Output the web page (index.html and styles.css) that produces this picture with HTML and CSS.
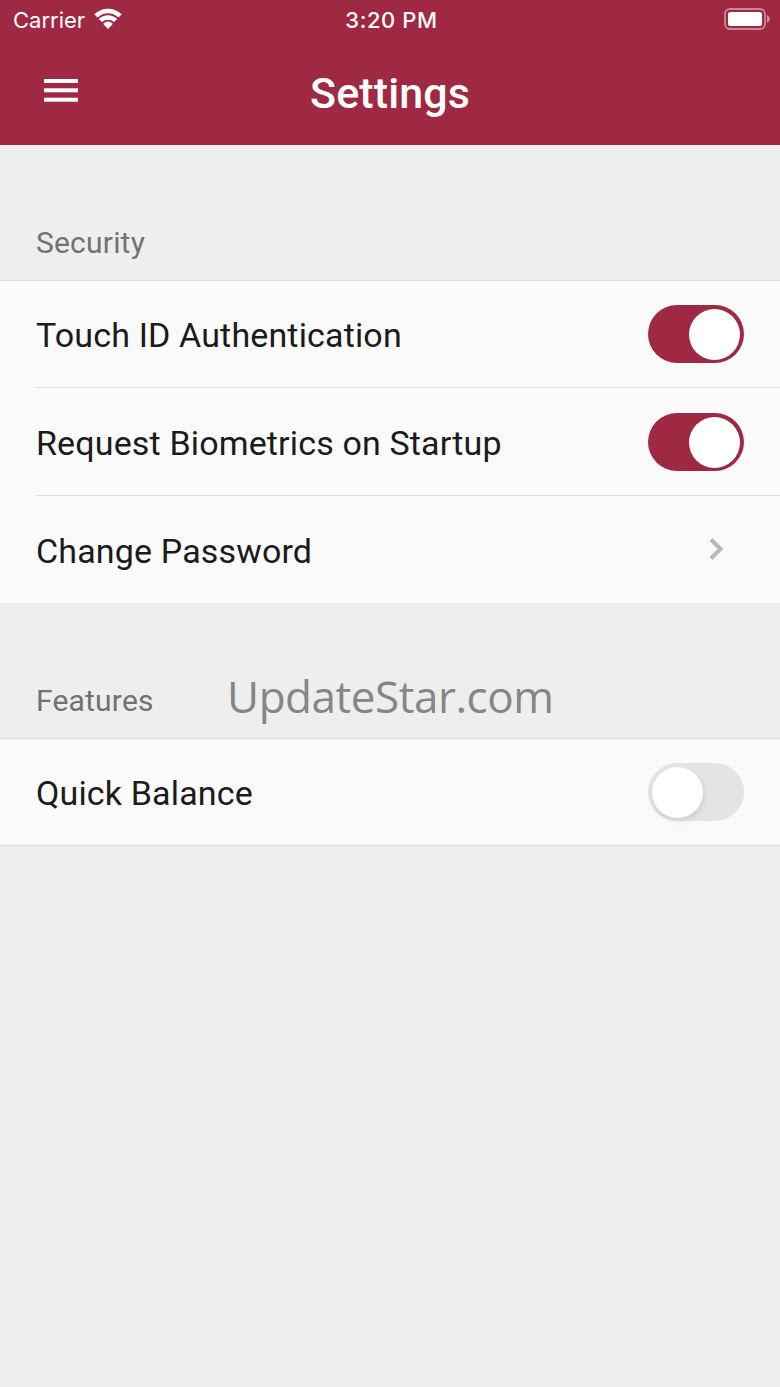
FILE: index.html
```
<!DOCTYPE html>
<html lang="en">
  <head>
    <meta charset="UTF-8" />
    <meta name="viewport" content="width=device-width, initial-scale=1.0" />
    <title>Settings</title>
    <link rel="stylesheet" href="styles.css">
  </head>
  <body>
    <header class="header">
      <div class="status-bar">
        <div class="status-bar__carrier">
          <span class="status-bar__name">Carrier</span>
          <svg class="wifi" width="28" height="22" viewBox="0 0 28 22">
            <path d="M0.200 6.300Q6 0.700 14 0.700t13.800 5.600L24.500 9.600Q20 5.200 14 5.200T3.500 9.600z" />
            <path d="M4.800 10.900Q8.800 7.200 14 7.200t9.200 3.700l-3.200 3.200q-2.700-2.400-6-2.400t-6 2.400z" />
            <path d="M9.500 15.500q2-1.900 4.500-1.900t4.500 1.900q.3.400 0 .8L14.500 20.600q-.5.500-1 0L9.500 16.300q-.3-.4 0-.8z" />
          </svg>
        </div>
        <div class="status-bar__time">3:20 PM</div>
        <svg class="battery" width="46" height="22" viewBox="0 0 46 22">
          <rect class="battery__frame" x="1" y="1" width="40" height="20" rx="5" />
          <rect x="4" y="4" width="34" height="14" rx="2.500" />
          <path class="battery__cap" d="M43 7q2.800 1.300 2.800 4T43 15z" />
        </svg>
      </div>
      <div class="toolbar">
        <button class="menu-button" aria-label="Menu">
          <svg width="34" height="23" viewBox="0 0 34 23">
            <rect width="34" height="4" />
            <rect y="9.300" width="34" height="4" />
            <rect y="18.700" width="34" height="4" />
          </svg>
        </button>
        <h1 class="toolbar__title">Settings</h1>
      </div>
    </header>
    <main class="settings">
      <h2 class="section-title">Security</h2>
      <ul class="list">
        <li class="list__item">
          <span class="list__label">Touch ID Authentication</span>
          <span class="toggle toggle--on"><span class="toggle__knob"></span></span>
        </li>
        <li class="list__item">
          <span class="list__label">Request Biometrics on Startup</span>
          <span class="toggle toggle--on"><span class="toggle__knob"></span></span>
        </li>
        <li class="list__item">
          <span class="list__label">Change Password</span>
          <svg class="chevron" width="18" height="24" viewBox="0 0 18 24">
            <path d="M3 2.500l9.500 9.500L3 21.500" />
          </svg>
        </li>
      </ul>
      <h2 class="section-title">Features</h2>
      <ul class="list list--last">
        <li class="list__item">
          <span class="list__label">Quick Balance</span>
          <span class="toggle"><span class="toggle__knob"></span></span>
        </li>
      </ul>
    </main>
    <div class="watermark">UpdateStar.com</div>
  </body>
</html>
```

FILE: styles.css
```
* {
  box-sizing: border-box;
}
body {
  position: relative;
  margin: 0;
  min-height: 1387px;
  background-color: #eeeeee;
  color: #1b1b1b;
  font-family: Roboto, sans-serif;
}
.header {
  height: 145px;
  background-color: #9f2842;
  color: white;
}
.status-bar {
  display: grid;
  grid-template-columns: 1fr auto 1fr;
  align-items: center;
  height: 38px;
  padding: 0 10px 0 13px;
  font-family: Inter, sans-serif;
  font-size: 22px;
}
.status-bar svg {
  fill: white;
}
.status-bar__carrier {
  display: flex;
  align-items: center;
  gap: 9px;
}
.status-bar__name,
.status-bar__time {
  padding-top: 2px;
}
.status-bar__time {
  font-weight: 500;
  letter-spacing: 0.6px;
}
.battery {
  justify-self: end;
}
.status-bar .battery__frame {
  fill: none;
  stroke: white;
  stroke-width: 1.8;
  opacity: 0.45;
}
.battery__cap {
  opacity: 0.5;
}
.toolbar {
  display: grid;
  grid-template-columns: 1fr auto 1fr;
  align-items: center;
  height: 107px;
}
.menu-button {
  width: 34px;
  height: 23px;
  margin: 0 0 3px 44px;
  padding: 0;
  border: none;
  background: none;
}
.menu-button svg {
  display: block;
  fill: white;
}
.toolbar__title {
  margin: 2px 0 0;
  font-size: 43px;
  font-weight: 500;
  letter-spacing: 0.1px;
}
.section-title {
  display: flex;
  align-items: flex-end;
  height: 135px;
  margin: 0;
  padding: 0 36px 20px;
  color: #727272;
  font-size: 30px;
  font-weight: 400;
  letter-spacing: 0.2px;
}
.list {
  margin: 0;
  padding: 0;
  border-top: 1px solid #dedede;
  background-color: #fafafa;
  list-style: none;
}
.list--last {
  border-bottom: 1px solid #dedede;
}
.list__item {
  display: flex;
  align-items: center;
  justify-content: space-between;
  height: 106px;
  margin-left: 36px;
  padding-right: 36px;
  font-size: 34px;
  letter-spacing: 0.15px;
}
.list__item + .list__item {
  height: 108px;
  border-top: 1px solid #dedede;
}
.list__label {
  padding-top: 2px;
}
.toggle {
  width: 96px;
  height: 58px;
  padding: 4px;
  border-radius: 29px;
  background-color: #e4e4e4;
}
.toggle__knob {
  display: block;
  width: 51px;
  height: 51px;
  border-radius: 50%;
  background-color: white;
  box-shadow: 1px 3px 6px rgba(0, 0, 0, 0.1);
}
.toggle--on {
  background-color: #9f2842;
}
.toggle--on .toggle__knob {
  margin-left: auto;
  box-shadow: none;
}
.chevron {
  margin: 0 18px 2px 0;
  fill: none;
  stroke: #b9b9b9;
  stroke-width: 4;
}
.watermark {
  position: absolute;
  top: 666px;
  left: 227px;
  color: #868686;
  font-family: "Open Sans", sans-serif;
  font-size: 44px;
  letter-spacing: -0.45px;
}
```
